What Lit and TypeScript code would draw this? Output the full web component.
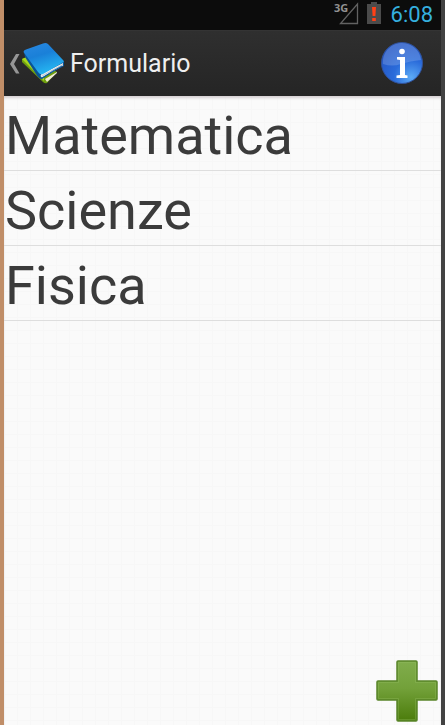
import { LitElement, html, css } from "lit";
import { customElement, state } from "lit/decorators.js";

@customElement("status-bar")
class StatusBar extends LitElement {
  static styles = css`
    :host {
      display: flex;
      justify-content: flex-end;
      align-items: center;
      height: 30px;
      padding-right: 8px;
      box-sizing: border-box;
      background: #0c0c0c;
    }
    .signal {
      width: 26px;
      height: 28px;
      overflow: visible;
    }
    .battery {
      width: 14px;
      height: 22px;
      margin: 0 10px 4px 8px;
    }
    .network {
      font: 700 11px "Open Sans", sans-serif;
      fill: #929292;
    }
    .clock {
      font: 400 22px/28px Roboto, sans-serif;
      color: #35b0df;
    }
  `;

  render() {
    return html`
      <svg class="signal" viewBox="0 0 26 28" aria-label="Segnale 3G">
        <path d="M7.5 22.5H24.5V3Z" fill="none" stroke="#626262" stroke-width="1.3" />
        <text class="network" x="1" y="11">3G</text>
      </svg>
      <svg class="battery" viewBox="0 0 14 22" aria-label="Batteria scarica">
        <path d="M4 0H10V2H14V22H0V2H4Z" fill="#4b4b4b" />
        <path d="M5 5H9L8.4 14H5.6ZM5.2 16H8.8V19H5.2Z" fill="#ff4016" />
      </svg>
      <time class="clock">6:08</time>
    `;
  }
}

@customElement("action-bar")
class ActionBar extends LitElement {
  static styles = css`
    :host {
      display: flex;
      align-items: center;
      justify-content: space-between;
      height: 66px;
      padding: 0 17px 0 4px;
      box-sizing: border-box;
      background: linear-gradient(#2f2f2f, #2a2a2a 50%, #252525);
      border-top: 1px solid #343434;
    }
    button {
      display: flex;
      align-items: center;
      padding: 0;
      border: 0;
      background: none;
      cursor: pointer;
    }
    .back {
      width: 13px;
      height: 22px;
    }
    .books {
      width: 44px;
      height: 42px;
    }
    .title {
      margin: 0 0 0 5px;
      font: 400 25px/32px Roboto, sans-serif;
      color: #efefef;
    }
    .info {
      width: 44px;
      height: 44px;
    }
  `;

  render() {
    return html`
      <button type="button">
        <svg class="back" viewBox="0 0 13 22" aria-hidden="true">
          <path d="M8 1H11.500L6 11L11.500 20.500H8L2 11Z" fill="#969696" />
        </svg>
        <svg class="books" viewBox="0 0 44 42" aria-hidden="true">
          <defs>
            <linearGradient id="cover" x1="0.2" y1="0" x2="0.6" y2="1">
              <stop offset="0" stop-color="#2787e0" />
              <stop offset="0.4" stop-color="#1a80d8" />
              <stop offset="1" stop-color="#26bbf4" />
            </linearGradient>
          </defs>
          <path d="M1 16L8 13L36 29L26 40Q24 41 22 39L1 19Z" fill="#6f9f0e" />
          <path d="M1 16L8 13L23 34V38Z" fill="#a8d61e" />
          <path d="M24 36L36 29V30L26 39Z" fill="#f0ecd4" />
          <path d="M3 9L20 31L43 18V23Q33 28 21 36Q18 36 15 31L4 14Z" fill="#0a5496" />
          <path d="M20.500 31L42 20V22.500L21 34.500Q18.500 33 20.500 31Z" fill="#e9edf0" />
          <path d="M21 33L42 21.500" stroke="#b5bdc3" stroke-width="0.8" fill="none" />
          <path d="M2.500 9Q2.500 7 5 6.500L22 0.500Q25 -0.500 27 1L42 17Q44 19 41 20L22 31Q19 32 17 29Z" fill="url(#cover)" />
          <path d="M41 23Q33 27 21 35" stroke="#0d5da1" fill="none" />
        </svg>
        <h1 class="title">Formulario</h1>
      </button>
      <button type="button" aria-label="Informazioni">
        <svg class="info" viewBox="0 0 44 44" aria-hidden="true">
          <defs>
            <radialGradient id="ball" cx="0.72" cy="0.85" r="0.85">
              <stop offset="0" stop-color="#5caaf5" />
              <stop offset="0.5" stop-color="#2a6bda" />
              <stop offset="1" stop-color="#2558c6" />
            </radialGradient>
          </defs>
          <circle cx="22" cy="21" r="20.500" fill="url(#ball)" stroke="#305199" />
          <path d="M3 22A19 19 0 0 1 41 18Q30 19 21 22T3 22Z" fill="#fff" opacity="0.17" />
          <circle cx="22" cy="9.500" r="2.800" fill="#fff" />
          <path d="M17 15H25V33L27.500 33.500V36H16.500V33.500L20 33V18L17 17.500Z" fill="#fff" />
        </svg>
      </button>
    `;
  }
}

@customElement("app-root")
class AppRoot extends LitElement {
  static styles = css`
    :host {
      display: flex;
      flex-direction: column;
      min-height: 100vh;
      box-sizing: border-box;
      border-left: 4px solid #c08e68;
      border-right: 4px solid #424242;
    }
    main {
      flex: 1;
      display: flex;
      flex-direction: column;
      justify-content: space-between;
      box-shadow: inset 0 3px 3px -1px #d4cfd1;
      background-color: #fafafa;
      background-image: linear-gradient(90deg, #f7f7f7 1px, transparent 1px),
        linear-gradient(#f7f7f7 1px, transparent 1px);
      background-size: 13px 13px;
    }
    .subjects {
      margin: 0;
      padding: 0;
      list-style: none;
    }
    .subject {
      display: flex;
      border-bottom: 1px solid #dedede;
    }
    .open {
      flex: 1;
      padding: 6px 0 0 1px;
      border: 0;
      background: none;
      text-align: left;
      font: 400 54px/68px Roboto, sans-serif;
      color: #3b3b3b;
      cursor: pointer;
    }
    .add {
      align-self: flex-end;
      display: flex;
      margin: 0 3px 3px 0;
      padding: 0;
      border: 0;
      background: none;
      cursor: pointer;
    }
    .plus {
      width: 62px;
      height: 62px;
    }
  `;

  @state() private subjects = ["Matematica", "Scienze", "Fisica"];

  render() {
    return html`
      <status-bar></status-bar>
      <action-bar></action-bar>
      <main>
        <ul class="subjects">
          ${this.subjects.map(
            (name) => html`<li class="subject"><button class="open" type="button">${name}</button></li>`
          )}
        </ul>
        <button class="add" type="button" aria-label="Aggiungi">
          <svg class="plus" viewBox="0 0 62 62" aria-hidden="true">
            <defs>
              <linearGradient id="leaf" x1="0" y1="0" x2="0" y2="1">
                <stop offset="0" stop-color="#80ad4c" />
                <stop offset="0.45" stop-color="#73a13a" />
                <stop offset="1" stop-color="#4b7c0b" />
              </linearGradient>
            </defs>
            <path
              d="M22 1H40Q41 1 41 2V21H60Q61 21 61 22V39Q61 40 60 40H41V60Q41 61 40 61H22Q21 61 21 60V40H2Q1 40 1 39V22Q1 21 2 21H21V2Q21 1 22 1Z"
              fill="url(#leaf)"
              stroke="#5a852a"
              stroke-width="1.500"
            />
            <path d="M22.500 2.500H39.500V22.500H59.500V38.500H39.500V59.500H22.500V38.500H2.500V22.500H22.500Z" fill="none" stroke="#9bc36a" opacity="0.3" />
          </svg>
        </button>
      </main>
    `;
  }
}
